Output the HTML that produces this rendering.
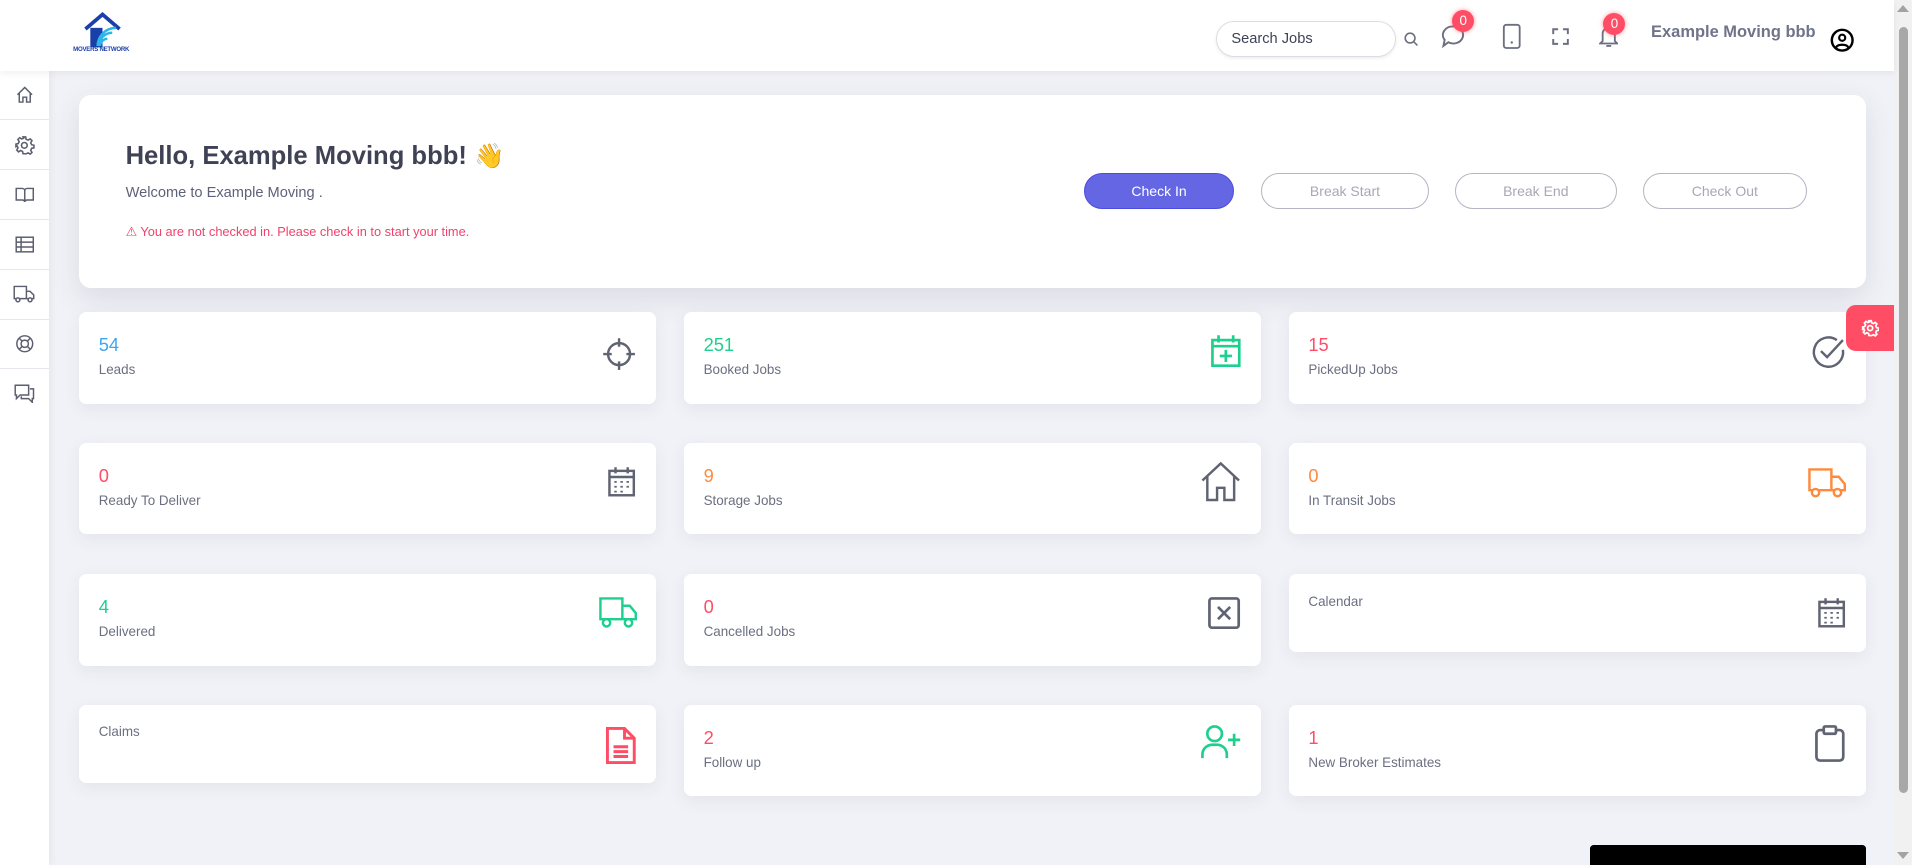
<!DOCTYPE html>
<html><head><meta charset="utf-8">
<style>
html,body{margin:0;padding:0}
body{width:1568px;height:709px;zoom:1.21939;overflow:hidden;position:relative;background:#f1f2f7;font-family:"Liberation Sans",sans-serif;color:#3f4254}
.abs{position:absolute}
.hdr{left:0;top:0;width:1553px;height:58px;background:#fff;box-shadow:0 2px 6px rgba(0,0,0,.06);z-index:2}
.side{left:0;top:58px;width:40px;height:651px;background:#fff;box-shadow:2px 0 6px rgba(0,0,0,.05);z-index:1}
.side div{height:40px;border-bottom:1px solid #e6e7ec;display:flex;align-items:center;justify-content:center}
.card{background:#fff;border-radius:6px;box-shadow:0 4px 14px rgba(60,60,90,.07)}
.num{position:absolute;left:16px;top:18px;font-size:15px}
.lbl{position:absolute;left:16px;top:41px;font-size:11px;color:#6b6f80}
.ic{position:absolute;right:16px;top:16px}
.btn{position:absolute;top:142px;height:29px;border-radius:15px;border:1px solid #b5b5c3;box-sizing:border-box;font-size:11.5px;color:#a8a8b5;display:flex;align-items:center;justify-content:center;background:#fff}
.badge{position:absolute;width:18px;height:18px;border-radius:9px;background:#ff4d66;color:#fff;font-size:11px;text-align:center;line-height:18px;box-shadow:0 0 4px rgba(255,77,102,.6)}
</style></head><body>
<div class="abs hdr">
  <svg class="abs" style="left:68px;top:10px" width="32" height="32" viewBox="0 0 32 32"><path d="M2 14 L16 2 L30 14" fill="none" stroke="#1a3fa8" stroke-width="3"/><rect x="6" y="13" width="10" height="16" fill="#1a3fa8"/><path d="M14 28 a6 6 0 0 1 6 -6 M13 28 a11 11 0 0 1 11 -11 M12 28 a15 15 0 0 1 15 -15" fill="none" stroke="#2bb5e8" stroke-width="2"/></svg>
  <div class="abs" style="left:60px;top:38px;font-size:5px;font-weight:bold;color:#1a3fa8;letter-spacing:-.2px">MOVERS NETWORK</div>
  <div class="abs" style="left:997px;top:17px;width:148px;height:30px;border:1px solid #dcdce4;border-radius:15px;box-sizing:border-box;box-shadow:0 1px 3px rgba(0,0,0,.08);font-size:12px;color:#3f4254;line-height:28px;padding-left:12px">Search Jobs</div>
  <svg class="abs" style="left:1151px;top:26px" width="12" height="12" viewBox="0 0 12 12"><circle cx="5" cy="5" r="4" fill="none" stroke="#6b6f80" stroke-width="1.3"/><path d="M8 8l3 3" stroke="#6b6f80" stroke-width="1.3"/></svg>
  <svg class="abs" style="left:1182px;top:20px" width="20" height="20" viewBox="0 0 20 20"><path d="M10 2a8 7 0 1 1-4 13l-4 3 1-5A8 7 0 0 1 10 2z" fill="none" stroke="#6b6f80" stroke-width="1.6"/></svg>
  <div class="badge" style="left:1191px;top:8px">0</div>
  <svg class="abs" style="left:1232px;top:19px" width="16" height="22" viewBox="0 0 16 22"><rect x="1.5" y="1.5" width="13" height="19" rx="2" fill="none" stroke="#6b6f80" stroke-width="1.5"/><circle cx="8" cy="16" r="1" fill="#6b6f80"/></svg>
  <svg class="abs" style="left:1273px;top:23px" width="14" height="14" viewBox="0 0 14 14"><path d="M1 5V1h4M9 1h4v4M13 9v4H9M5 13H1V9" fill="none" stroke="#6b6f80" stroke-width="1.6"/></svg>
  <svg class="abs" style="left:1311px;top:20px" width="16" height="20" viewBox="0 0 16 20"><path d="M3 14V8a5 5 0 0 1 10 0v6l2 2H1z" fill="none" stroke="#6b6f80" stroke-width="1.5"/><path d="M6 18h4" stroke="#6b6f80" stroke-width="1.5"/></svg>
  <div class="badge" style="left:1315px;top:11px">0</div>
  <div class="abs" style="left:1354px;top:19px;font-size:13.5px;font-weight:bold;color:#70748a">Example Moving bbb</div>
  <svg class="abs" style="left:1501px;top:23px" width="20" height="20" viewBox="0 0 20 20"><circle cx="10" cy="10" r="8.5" fill="none" stroke="#000" stroke-width="2"/><circle cx="10" cy="8" r="2.5" fill="none" stroke="#000" stroke-width="1.8"/><path d="M5 16c1-3 9-3 10 0" fill="none" stroke="#000" stroke-width="1.8"/></svg>
</div>
<div class="abs side">
  <div><svg width="16" height="16" viewBox="0 0 16 16" fill="none" stroke="#5a5e6e" stroke-width="1.2"><path d="M2 8L8 2l6 6M3.5 6.5V14h3v-4h3v4h3V6.5"/></svg></div>
  <div><svg width="17" height="17" viewBox="0 0 16 16" fill="none" stroke="#5a5e6e" stroke-width="1.2"><circle cx="8" cy="8" r="2.2"/><path d="M7 1.5h2l.4 1.8 1.5.7 1.6-1 1.4 1.4-1 1.6.7 1.5 1.8.4v2l-1.8.4-.7 1.5 1 1.6-1.4 1.4-1.6-1-1.5.7L9 14.5H7l-.4-1.8-1.5-.7-1.6 1-1.4-1.4 1-1.6-.7-1.5L1.5 9V7l1.8-.4.7-1.5-1-1.6 1.4-1.4 1.6 1 1.5-.7z"/></svg></div>
  <div><svg width="16" height="14" viewBox="0 0 16 14" fill="none" stroke="#5a5e6e" stroke-width="1.2"><path d="M1 2h5a2 2 0 0 1 2 2v9a2 2 0 0 0-2-1.5H1zM15 2h-5a2 2 0 0 0-2 2v9a2 2 0 0 1 2-1.5h5z"/></svg></div>
  <div><svg width="16" height="14" viewBox="0 0 16 14" fill="none" stroke="#5a5e6e" stroke-width="1.2"><rect x="1" y="1" width="14" height="12"/><path d="M1 5h14M1 9h14M5 1v12"/></svg></div>
  <div><svg width="18" height="16" viewBox="0 0 18 16" fill="none" stroke="#5a5e6e" stroke-width="1.2"><path d="M1 2h10v10H1zM11 6h3l3 3v3h-6"/><circle cx="4" cy="13" r="1.6" fill="#fff"/><circle cx="14" cy="13" r="1.6" fill="#fff"/></svg></div>
  <div><svg width="16" height="16" viewBox="0 0 16 16" fill="none" stroke="#5a5e6e" stroke-width="1.2"><circle cx="8" cy="8" r="6.5"/><circle cx="8" cy="8" r="3"/><path d="M3.5 3.5l2.4 2.4M12.5 3.5l-2.4 2.4M3.5 12.5l2.4-2.4M12.5 12.5l-2.4-2.4"/></svg></div>
  <div style="border:none"><svg width="17" height="16" viewBox="0 0 17 16" fill="none" stroke="#5a5e6e" stroke-width="1.2"><path d="M1 1h11v8H5l-3 3V9H1zM13 4h3v8h-1v3l-3-3H6v-2"/></svg></div>
</div>

<div class="abs card" style="left:65px;top:78px;width:1465px;height:158px;border-radius:10px;box-shadow:0 8px 24px rgba(60,60,90,.12)">
  <div class="abs" style="left:38px;top:38px;font-size:21px;font-weight:bold;color:#3f4254">Hello, Example Moving bbb! <span style="font-family:'Noto Color Emoji','DejaVu Sans',sans-serif;font-size:20px">👋</span></div>
  <div class="abs" style="left:38px;top:74px;font-size:12px;color:#5e6278">Welcome to Example Moving .</div>
  <div class="abs" style="left:38px;top:106px;font-size:10.5px;color:#f1416c">⚠ You are not checked in. Please check in to start your time.</div>
</div>
<div class="btn" style="left:889px;width:123px;background:#6466e3;border-color:#4a4ce0;color:#fff">Check In</div>
<div class="btn" style="left:1034px;width:138px">Break Start</div>
<div class="btn" style="left:1193px;width:133px">Break End</div>
<div class="btn" style="left:1347px;width:135px">Check Out</div>

<div class="abs card" style="left:65px;top:256px;width:473px;height:75px"><div class="num" style="color:#3da5f4">54</div><div class="lbl">Leads</div>
<svg class="ic" style="top:20px" width="28" height="28" viewBox="0 0 28 28" fill="none" stroke="#5f6372" stroke-width="2"><circle cx="14" cy="14" r="9"/><path d="M14 1v7M14 20v7M1 14h7M20 14h7"/></svg></div>
<div class="abs card" style="left:561px;top:256px;width:473px;height:75px"><div class="num" style="color:#1fcf8e">251</div><div class="lbl">Booked Jobs</div>
<svg class="ic" style="top:18px" width="26" height="28" viewBox="0 0 26 28" fill="none" stroke="#1fcf8e" stroke-width="2.2"><rect x="2" y="5" width="22" height="21"/><path d="M2 10h22M7 1v6M19 1v6M13 13v10M8 18h10"/></svg></div>
<div class="abs card" style="left:1057px;top:256px;width:473px;height:75px"><div class="num" style="color:#ff4d66">15</div><div class="lbl">PickedUp Jobs</div>
<svg class="ic" style="top:18px" width="30" height="30" viewBox="0 0 30 30" fill="none" stroke="#5f6372" stroke-width="2"><path d="M27 13a12 12 0 1 1-5-8"/><path d="M9 14l5 5L27 5"/></svg></div>

<div class="abs card" style="left:65px;top:363px;width:473px;height:75px"><div class="num" style="color:#ff4d66">0</div><div class="lbl">Ready To Deliver</div>
<svg class="ic" style="top:19px" width="24" height="26" viewBox="0 0 24 26" fill="none" stroke="#5f6372" stroke-width="2"><rect x="2" y="4" width="20" height="20"/><path d="M2 9h20M7 1v5M17 1v5"/><path d="M6 13h2M11 13h2M16 13h2M6 17h2M11 17h2M16 17h2M6 21h2M11 21h2" stroke-width="1.5"/></svg></div>
<div class="abs card" style="left:561px;top:363px;width:473px;height:75px"><div class="num" style="color:#ff8a3d">9</div><div class="lbl">Storage Jobs</div>
<svg class="ic" style="top:15px" width="34" height="34" viewBox="0 0 34 34" fill="none" stroke="#5f6372" stroke-width="2"><path d="M2 16L17 2l15 14M6 12v20h8V22h6v10h8V12"/></svg></div>
<div class="abs card" style="left:1057px;top:363px;width:473px;height:75px"><div class="num" style="color:#ff8a3d">0</div><div class="lbl">In Transit Jobs</div>
<svg class="ic" style="top:20px" width="32" height="26" viewBox="0 0 32 26" fill="none" stroke="#ff8a3d" stroke-width="2"><path d="M2 2h18v17H2zM20 8h6l5 6v5H20"/><circle cx="7" cy="21" r="3" fill="#fff"/><circle cx="25" cy="21" r="3" fill="#fff"/></svg></div>

<div class="abs card" style="left:65px;top:471px;width:473px;height:75px"><div class="num" style="color:#1fcf8e">4</div><div class="lbl">Delivered</div>
<svg class="ic" style="top:18px" width="32" height="27" viewBox="0 0 32 27" fill="none" stroke="#1fcf8e" stroke-width="2"><path d="M2 2h18v17H2zM20 8h6l5 6v5H20"/><circle cx="7" cy="22" r="3" fill="#fff"/><circle cx="25" cy="22" r="3" fill="#fff"/></svg></div>
<div class="abs card" style="left:561px;top:471px;width:473px;height:75px"><div class="num" style="color:#ff4d66">0</div><div class="lbl">Cancelled Jobs</div>
<svg class="ic" style="top:18px" width="28" height="28" viewBox="0 0 28 28" fill="none" stroke="#5f6372" stroke-width="2.2"><rect x="2" y="2" width="24" height="24" rx="2"/><path d="M9 9l10 10M19 9L9 19"/></svg></div>
<div class="abs card" style="left:1057px;top:471px;width:473px;height:64px"><div class="lbl" style="top:16px">Calendar</div>
<svg class="ic" style="top:19px" width="24" height="26" viewBox="0 0 24 26" fill="none" stroke="#5f6372" stroke-width="2"><rect x="2" y="4" width="20" height="20"/><path d="M2 9h20M7 1v5M17 1v5"/><path d="M6 13h2M11 13h2M16 13h2M6 17h2M11 17h2M16 17h2M6 21h2M11 21h2" stroke-width="1.5"/></svg></div>

<div class="abs card" style="left:65px;top:578px;width:473px;height:64px"><div class="lbl" style="top:16px">Claims</div>
<svg class="ic" style="top:17px" width="26" height="32" viewBox="0 0 26 32" fill="none" stroke="#ff4d66" stroke-width="2.4"><path d="M2 2h14l8 8v20H2zM16 2v8h8"/><path d="M7 17h12M7 21h12M7 25h12"/></svg></div>
<div class="abs card" style="left:561px;top:578px;width:473px;height:75px"><div class="num" style="color:#ff4d66">2</div><div class="lbl">Follow up</div>
<svg class="ic" style="top:16px" width="34" height="30" viewBox="0 0 34 30" fill="none" stroke="#1fcf8e" stroke-width="2.2"><circle cx="12" cy="8" r="6"/><path d="M2 28v-3a8 8 0 0 1 8-8h4a8 8 0 0 1 8 8v3M28 8v10M23 13h10"/></svg></div>
<div class="abs card" style="left:1057px;top:578px;width:473px;height:75px"><div class="num" style="color:#ff4d66">1</div><div class="lbl">New Broker Estimates</div>
<svg class="ic" style="top:16px" width="26" height="32" viewBox="0 0 26 32" fill="none" stroke="#5f6372" stroke-width="2.2"><rect x="2" y="5" width="22" height="25" rx="3"/><rect x="8" y="2" width="10" height="6" rx="1" fill="#fff"/></svg></div>

<div class="abs" style="left:1514px;top:250px;width:39px;height:38px;background:#ff4d66;border-radius:8px 0 0 8px;display:flex;align-items:center;justify-content:center"><svg width="15" height="15" viewBox="0 0 16 16" fill="none" stroke="#fff" stroke-width="1.5"><circle cx="8" cy="8" r="2.2"/><path d="M7 1.5h2l.4 1.8 1.5.7 1.6-1 1.4 1.4-1 1.6.7 1.5 1.8.4v2l-1.8.4-.7 1.5 1 1.6-1.4 1.4-1.6-1-1.5.7L9 14.5H7l-.4-1.8-1.5-.7-1.6 1-1.4-1.4 1-1.6-.7-1.5L1.5 9V7l1.8-.4.7-1.5-1-1.6 1.4-1.4 1.6 1 1.5-.7z"/></svg></div>
<div class="abs" style="left:1304px;top:693px;width:226px;height:16px;background:#000;border-radius:3px 3px 0 0"></div>
<div class="abs" style="left:1553px;top:0;width:15px;height:709px;background:#f1f1f1"></div>
<div class="abs" style="left:1557px;top:22px;width:8px;height:628px;background:#a8a8a8;border-radius:4px"></div>
<div class="abs" style="left:1556px;top:4px;width:0;height:0;border-left:5px solid transparent;border-right:5px solid transparent;border-bottom:6px solid #a3a3a3"></div>
<div class="abs" style="left:1556px;top:699px;width:0;height:0;border-left:5px solid transparent;border-right:5px solid transparent;border-top:6px solid #a3a3a3"></div>
</body></html>
